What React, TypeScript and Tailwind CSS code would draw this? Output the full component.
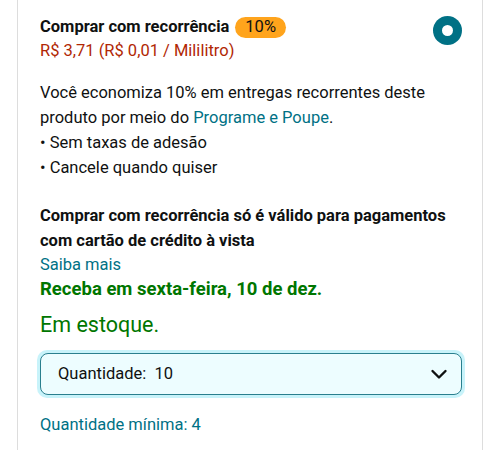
export default function App() {
  return (
    <div
      className="w-[500px] h-[450px] bg-white overflow-hidden px-[17px]"
      style={{ fontFamily: 'Roboto, "Noto Sans", sans-serif' }}
    >
      <div className="h-full border-x border-[#dddddd] pl-[22px] pr-[20px] pt-[15px] text-[#0f1111]">
        {/* Header row */}
        <div className="flex items-start justify-between">
          <div>
            <div className="flex items-center gap-[6px] h-[24px]">
              <span className="text-[16.5px] font-bold leading-[24px]">Comprar com recorrência</span>
              <span className="bg-[#ffa41c] rounded-full px-[10px] h-[21px] flex items-center text-[16.5px] leading-none">
                10%
              </span>
            </div>
            <div className="text-[16.5px] leading-[24px] text-[#b12704]">R$ 3,71 (R$ 0,01 / Mililitro)</div>
          </div>
          <div className="mt-[1px] w-[29px] h-[29px] rounded-full bg-[#007185] flex items-center justify-center">
            <div className="w-[11px] h-[11px] rounded-full bg-white" />
          </div>
        </div>

        {/* Description */}
        <div className="mt-[17px] text-[16.5px] leading-[25px]">
          <p>
            Você economiza 10% em entregas recorrentes deste produto por meio do{" "}
            <span className="text-[#007185]">Programe e Poupe</span>.
          </p>
          <p>• Sem taxas de adesão</p>
          <p>• Cancele quando quiser</p>
        </div>

        <p className="mt-[23px] text-[16.5px] font-bold leading-[25px]">
          Comprar com recorrência só é válido para pagamentos com cartão de crédito à vista
        </p>
        <p className="text-[16.5px] leading-[24px] text-[#007185]">Saiba mais</p>
        <p className="text-[18.5px] font-bold leading-[24px] text-[#007600]">Receba em sexta-feira, 10 de dez.</p>

        <p className="mt-[10px] text-[21.5px] leading-[28px] text-[#007600]">Em estoque.</p>

        {/* Quantity select */}
        <div className="mt-[11px] -ml-[3px] rounded-[10px] p-[3px] bg-[#c8f3fa] w-[428px]">
          <div className="h-[42px] rounded-[8px] border border-[#2a7f8e] bg-[#edfdff] flex items-center justify-between pl-[17px] pr-[12px]">
            <span className="text-[16.5px]">Quantidade:&nbsp; 10</span>
            <svg width="20" height="20" viewBox="0 0 20 20" fill="none">
              <path d="M3.5 7l6.5 6.5L16.5 7" stroke="#0f1111" strokeWidth="2.4" strokeLinecap="round" strokeLinejoin="round" />
            </svg>
          </div>
        </div>

        <p className="mt-[15px] text-[16.5px] leading-[24px] text-[#007185]">Quantidade mínima: 4</p>
      </div>
    </div>
  );
}
